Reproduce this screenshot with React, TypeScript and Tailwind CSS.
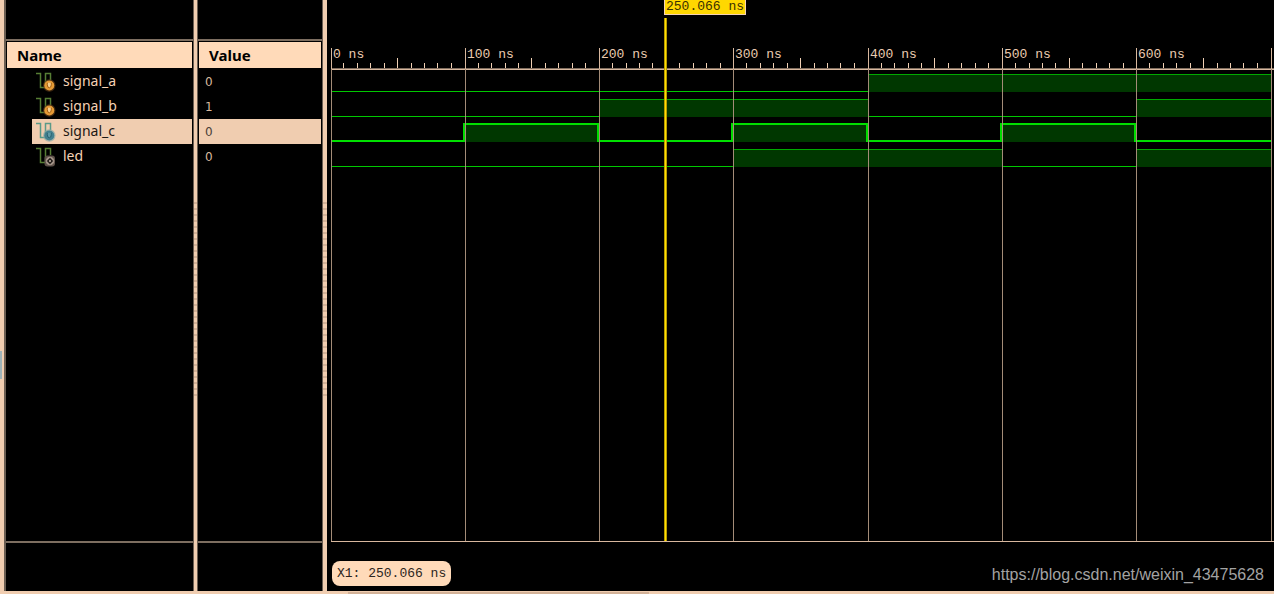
import type { ReactNode } from 'react';

type Signal = {
  name: string;
  value: string;
  kind: 'input' | 'output';
  selected?: boolean;
  // one level per 100 ns slot
  levels: number[];
};

const SIGNALS: Signal[] = [
  { name: 'signal_a', value: '0', kind: 'input', levels: [0, 0, 0, 0, 1, 1, 1] },
  { name: 'signal_b', value: '1', kind: 'input', levels: [0, 0, 1, 1, 0, 0, 1] },
  { name: 'signal_c', value: '0', kind: 'input', selected: true, levels: [0, 1, 0, 1, 0, 1, 0] },
  { name: 'led', value: '0', kind: 'output', levels: [0, 0, 0, 1, 1, 0, 1] },
];

const SLOT = 134.33;
const ROW = 25;
const AXIS_Y = 68;
const CURSOR_X = 333;

const slotX = (i: number) => Math.floor(i * SLOT);

function SignalIcon({ kind, selected }: { kind: Signal['kind']; selected?: boolean }) {
  const wave = selected ? '#5a9a88' : '#567d34';
  return (
    <svg className="size-5 shrink-0" viewBox="0 0 20 20" aria-hidden="true">
      <path d="M0 1.5H4.5V15.5H9.5V1.5H14.5V8" fill="none" stroke={wave} strokeWidth="1.5" />
      {kind === 'input' ? (
        <>
          <circle cx="13.3" cy="13.5" r="6.2" fill={selected ? '#8aa8a4' : '#5c3a18'} opacity="0.7" />
          <circle cx="13.3" cy="13.5" r="5" fill={selected ? '#43808f' : '#e59a35'} />
          <path
            d="M11.3 10.8V12.8Q11.5 15.8 13.3 15.8Q15.1 15.8 15.3 12.8V10.8"
            fill={selected ? '#5f99a5' : '#f8cf8c'}
            stroke={selected ? '#29606f' : '#a45f13'}
            strokeWidth="1"
          />
        </>
      ) : (
        <>
          <rect x="8.5" y="8.5" width="10.5" height="11" rx="3" fill="#5d5049" />
          <circle cx="14" cy="14" r="4.3" fill="#a39388" />
          <path d="M14 10.8L17.2 14L14 17.2L10.8 14Z" fill="#211b18" />
          <circle cx="14" cy="14" r="1" fill="#c9b8aa" />
        </>
      )}
    </svg>
  );
}

function Pane({ width, title, children }: { width: string; title: string; children: ReactNode }) {
  return (
    <section className={`flex shrink-0 flex-col border-r border-r-[#6b5e52] ${width}`}>
      <div className="h-[41px] shrink-0 border-b-2 border-[#7d6e60]" />
      <div className="flex-1 px-px pt-px">
        <table className="w-full border-collapse text-left">
          <thead>
            <tr>
              <th className="h-[27px] p-0 align-top">
                <div className="h-[26px] bg-[#ffdab9] px-[10px] text-[15px] leading-[26px] font-bold text-black">
                  {title}
                </div>
              </th>
            </tr>
          </thead>
          <tbody>{children}</tbody>
        </table>
      </div>
      <div className="h-[50px] shrink-0 border-t-2 border-[#7d6e60]" />
    </section>
  );
}

function Splitter({ width }: { width: string }) {
  return (
    <div className={`flex shrink-0 flex-col bg-[#f0cdb0] pt-[202px] ${width}`}>
      {/* grip dots */}
      {Array.from({ length: 33 }, (_, i) => (
        <div key={i} className="mb-1 h-[2px] bg-[#d3b298]" />
      ))}
    </div>
  );
}

function Trace({ signal, row }: { signal: Signal; row: number }) {
  const { levels, selected } = signal;
  const top = AXIS_Y + 1 + row * ROW;
  const fillY = top + 5;
  const highY = selected ? fillY - 1 : fillY;
  const lowY = selected ? top + 21 : top + 22;
  return (
    <g>
      {levels.map((level, i) => {
        const x = slotX(i);
        const w = slotX(i + 1) - x;
        return (
          <g key={i}>
            {level === 1 && <rect x={x} y={fillY} width={w} height={18} fill="#003700" />}
            <rect
              x={x}
              y={level ? highY : lowY}
              width={w}
              height={selected ? 2 : 1}
              fill={selected ? '#00e000' : level ? '#00aa00' : '#00c800'}
            />
            {selected && i > 0 && levels[i - 1] !== level && (
              <rect x={x - 2} y={highY} width={2} height={19} fill="#00dc00" />
            )}
          </g>
        );
      })}
    </g>
  );
}

function Waveform() {
  const ticks = Array.from({ length: 70 }, (_, i) => i).filter((i) => i % 10 !== 0);
  return (
    <svg className="block h-full w-full" shapeRendering="crispEdges" role="img" aria-label="Waveform">
      {SIGNALS.map((s, i) => (
        <Trace key={s.name} signal={s} row={i} />
      ))}
      {ticks.map((i) => {
        const tall = i % 5 === 0;
        return (
          <rect
            key={i}
            x={Math.round((i * SLOT) / 10) - 1}
            y={tall ? AXIS_Y - 10 : AXIS_Y - 5}
            width={1}
            height={tall ? 10 : 5}
            fill="#f0d0b4"
          />
        );
      })}
      <rect x={0} y={AXIS_Y} width="100%" height={1} fill="#806e5f" />
      <rect x={0} y={AXIS_Y + 1} width="100%" height={1} fill="#d8b89e" />
      {Array.from({ length: 8 }, (_, i) => (
        <g key={i}>
          <rect x={slotX(i)} y={48} width={1} height="100%" fill="#a48c78" />
          <rect x={slotX(i)} y={48} width={1} height={21} fill="#d8b89e" />
          {i < 7 && (
            <text
              x={slotX(i) + 2}
              y={58}
              fill="#ecccb0"
              className="font-['Liberation_Mono',monospace] text-[13px]"
            >
              {`${i * 100} ns`}
            </text>
          )}
        </g>
      ))}
      <rect x={CURSOR_X} y={18} width={3} height="100%" fill="#b89a00" />
      <rect x={CURSOR_X + 1} y={18} width={1} height="100%" fill="#ffe000" />
    </svg>
  );
}

export default function App() {
  return (
    <div className="flex h-screen flex-col overflow-hidden bg-black font-['Noto_Sans',sans-serif] text-[14px] text-[#f5d2b4]">
      <div className="flex min-h-0 flex-1">
        <div className="flex w-1 shrink-0 flex-col justify-center bg-[#f0cdb0] pt-[138px]">
          <div className="h-7 w-[2px] bg-[#9fb3b8]" />
        </div>

        <Pane width="w-[190px] border-l-2 border-l-[#6b5e52]" title="Name">
          {SIGNALS.map((s) => (
            <tr key={s.name}>
              <td className="py-0 pr-0 pl-[25px]">
                <div
                  className={`flex h-[25px] items-center gap-[7px] pl-1 ${
                    s.selected ? 'bg-[#f0cdb0] text-[#1c1714]' : ''
                  }`}
                >
                  <SignalIcon kind={s.kind} selected={s.selected} />
                  <span className="pb-[2px]">{s.name}</span>
                </div>
              </td>
            </tr>
          ))}
        </Pane>

        <Splitter width="w-[3px]" />

        <Pane width="w-[126px] border-l border-l-[#6b5e52]" title="Value">
          {SIGNALS.map((s) => (
            <tr key={s.name}>
              <td className="p-0">
                <div
                  className={`h-[25px] px-[6px] font-['DejaVu_Sans',sans-serif] text-[12px] leading-[26px] ${
                    s.selected ? 'bg-[#f0cdb0] text-[#4a3f38]' : 'text-[#d8b89e]'
                  }`}
                >
                  {s.value}
                </div>
              </td>
            </tr>
          ))}
        </Pane>

        <Splitter width="w-1" />

        <main className="flex min-w-0 flex-1 flex-col pl-1">
          <div className="relative min-h-0 flex-1 border-b border-[#d8b89e]">
            <Waveform />
            {/* cursor time */}
            <div className="absolute top-0 left-[333px] h-[15px] border-r border-b border-l border-[#f5d2b4] bg-[#ffd700] px-px font-['Liberation_Mono',monospace] text-[13px] leading-[14px] whitespace-nowrap text-[#3a3000]">
              250.066 ns
            </div>
          </div>
          <footer className="flex h-[49px] shrink-0 items-center justify-between pr-[10px]">
            <div className="mt-[14px] ml-px flex h-[25px] items-center rounded-lg bg-[#ffdab9] px-[5px] font-['Liberation_Mono',monospace] text-[13px] whitespace-nowrap text-[#2c2520]">
              X1: 250.066 ns
            </div>
            <a
              href="https://blog.csdn.net/weixin_43475628"
              className="mt-4 font-['Liberation_Sans',sans-serif] text-[16px] text-[#a3a3a3]"
            >
              https://blog.csdn.net/weixin_43475628
            </a>
          </footer>
        </main>
      </div>

      {/* horizontal scrollbar strip */}
      <div className="h-[3px] shrink-0 bg-[#f0cdb0] pt-px pl-[348px]">
        <div className="h-[2px] w-[301px] bg-[#d3b298]" />
      </div>
    </div>
  );
}
